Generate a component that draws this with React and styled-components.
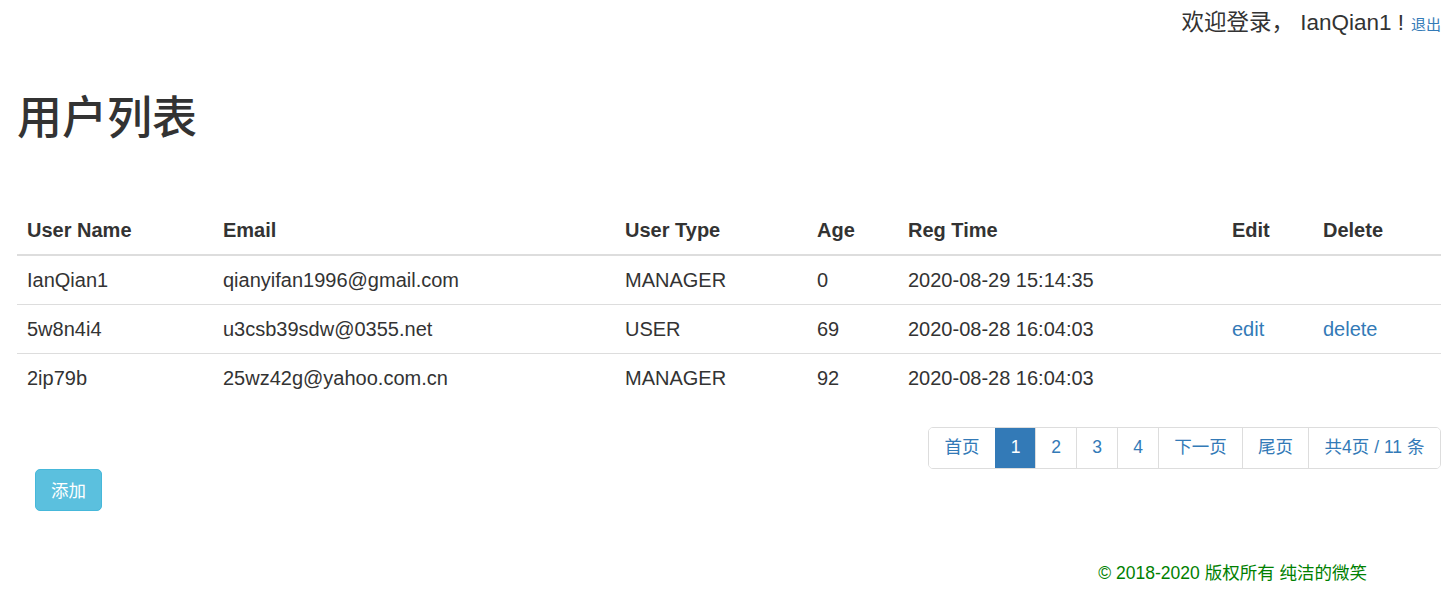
import React from "react";
import styled, { createGlobalStyle } from "styled-components";

const GlobalStyle = createGlobalStyle`
  body {
    margin: 0;
    background: #fff;
    color: #333;
    font-family: "Liberation Sans", "Noto Sans CJK SC", sans-serif;
    font-size: 17.5px;
    line-height: 1.42857;
  }
`;

const USERS = [
  { name: "IanQian1", email: "qianyifan1996@gmail.com", type: "MANAGER", age: 0, time: "2020-08-29 15:14:35", links: false },
  { name: "5w8n4i4", email: "u3csb39sdw@0355.net", type: "USER", age: 69, time: "2020-08-28 16:04:03", links: true },
  { name: "2ip79b", email: "25wz42g@yahoo.com.cn", type: "MANAGER", age: 92, time: "2020-08-28 16:04:03", links: false },
];

const COLUMNS = [
  { label: "User Name", width: 196 },
  { label: "Email", width: 402 },
  { label: "User Type", width: 192 },
  { label: "Age", width: 91 },
  { label: "Reg Time", width: 324 },
  { label: "Edit", width: 91 },
  { label: "Delete", width: 128 },
];

const PAGES = [
  { label: "首页", width: 66 },
  { label: "1", width: 40, active: true },
  { label: "2", width: 41 },
  { label: "3", width: 41 },
  { label: "4", width: 41 },
  { label: "下一页", width: 84 },
  { label: "尾页", width: 66 },
  { label: "共4页 / 11 条", width: 132 },
];

export default function App() {
  return (
    <Page>
      <GlobalStyle />
      <TopBar>
        <Welcome>欢迎登录， IanQian1 !</Welcome>
        <Logout href="#">退出</Logout>
      </TopBar>
      <Title>用户列表</Title>
      <Table>
        <colgroup>
          {COLUMNS.map((c) => (
            <col key={c.label} style={{ width: c.width }} />
          ))}
        </colgroup>
        <thead>
          <tr>
            {COLUMNS.map((c) => (
              <Th key={c.label}>{c.label}</Th>
            ))}
          </tr>
        </thead>
        <tbody>
          {USERS.map((u) => (
            <tr key={u.name}>
              <Td>{u.name}</Td>
              <Td>{u.email}</Td>
              <Td>{u.type}</Td>
              <Td>{u.age}</Td>
              <Td>{u.time}</Td>
              <Td>{u.links && <Link href="#">edit</Link>}</Td>
              <Td>{u.links && <Link href="#">delete</Link>}</Td>
            </tr>
          ))}
        </tbody>
      </Table>
      <PagerRow>
        <Pager>
          {PAGES.map((p) => (
            <PageItem key={p.label} $active={p.active} $w={p.width}>
              {p.label}
            </PageItem>
          ))}
        </Pager>
      </PagerRow>
      <AddButton>添加</AddButton>
      <Footer>© 2018-2020 版权所有 纯洁的微笑</Footer>
    </Page>
  );
}

const Page = styled.div`
  padding: 0 12px 0 17px;
  height: 595px;
  box-sizing: border-box;
`;

const TopBar = styled.div`
  display: flex;
  justify-content: flex-end;
  align-items: baseline;
  padding-top: 9px;
  height: 36px;
  box-sizing: border-box;
`;

const Welcome = styled.span`
  font-size: 22.5px;
  line-height: 28px;
  white-space: pre;
`;

const Logout = styled.a`
  font-size: 15px;
  color: #337ab7;
  text-decoration: none;
  margin-left: 7px;
`;

const Title = styled.h1`
  margin: 58px 0 0;
  font-size: 45px;
  font-weight: 500;
  line-height: 1.1;
  color: #333;
`;

const Table = styled.table`
  margin-top: 62px;
  width: 1424px;
  table-layout: fixed;
  border-collapse: collapse;
  border-spacing: 0;
  font-size: 20px;
`;

const Th = styled.th`
  text-align: left;
  font-weight: bold;
  padding: 10px;
  border-bottom: 2px solid #ddd;
  line-height: 28px;
`;

const Td = styled.td`
  padding: 10px;
  border-top: 1px solid #ddd;
  line-height: 28px;
  white-space: nowrap;
`;

const Link = styled.a`
  color: #337ab7;
  text-decoration: none;
`;

const PagerRow = styled.div`
  display: flex;
  justify-content: flex-end;
  margin-top: 25px;
`;

const Pager = styled.div`
  display: flex;
  border: 1px solid #ddd;
  border-radius: 5px;
  overflow: hidden;
`;

const PageItem = styled.span`
  width: ${(p) => p.$w}px;
  box-sizing: border-box;
  height: 40px;
  display: flex;
  align-items: center;
  justify-content: center;
  color: ${(p) => (p.$active ? "#fff" : "#337ab7")};
  background: ${(p) => (p.$active ? "#337ab7" : "#fff")};
  border-left: 1px solid ${(p) => (p.$active ? "#337ab7" : "#ddd")};
  white-space: nowrap;
  &:first-child {
    border-left: none;
  }
`;

const AddButton = styled.button`
  display: block;
  margin: 0 0 0 18px;
  width: 67px;
  height: 42px;
  background: #5bc0de;
  border: 1px solid #46b8da;
  border-radius: 5px;
  color: #fff;
  font-family: inherit;
  font-size: 17.5px;
  padding: 0;
`;

const Footer = styled.div`
  margin-top: 50px;
  padding-right: 74px;
  text-align: right;
  color: green;
  font-size: 17.5px;
`;
